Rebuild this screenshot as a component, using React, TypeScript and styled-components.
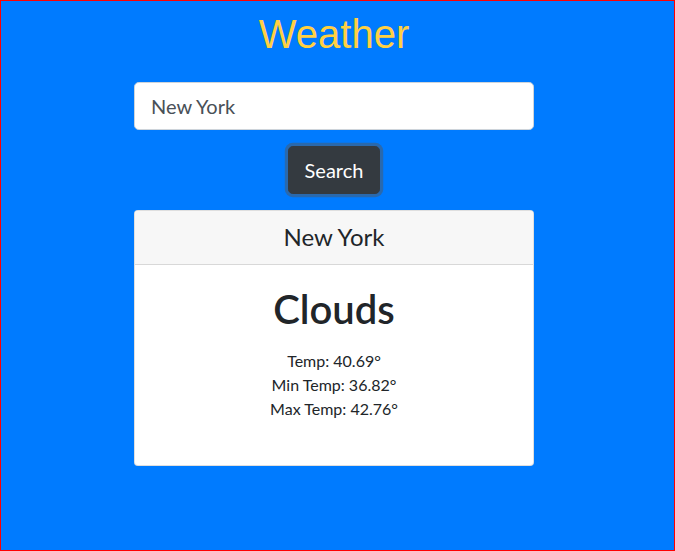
import React from "react";
import styled, { createGlobalStyle } from "styled-components";

const GlobalStyle = createGlobalStyle`
  *, *::before, *::after { box-sizing: border-box; }
  html, body { margin: 0; padding: 0; }
  body {
    font-family: Lato, "Open Sans", sans-serif;
    color: #212529;
    background: #007bff;
  }
`;

const Page = styled.div`
  width: 675px;
  height: 551px;
  border: 1px solid #ff0000;
  background: #007bff;
  display: flex;
  flex-direction: column;
  align-items: center;
  padding: 0 7px 0 0;
`;

const Title = styled.h1`
  margin: 9px 0 24px;
  font-family: "Liberation Sans", Arial, sans-serif;
  font-size: 40px;
  font-weight: 400;
  line-height: 48px;
  color: #ffd043;
  text-align: center;
`;

const Column = styled.div`
  width: 400px;
  display: flex;
  flex-direction: column;
  align-items: center;
`;

const SearchInput = styled.input`
  width: 100%;
  height: 48px;
  padding: 8px 16px;
  font-family: inherit;
  font-size: 20px;
  line-height: 1.5;
  color: #495057;
  background: #fff;
  border: 1px solid #ced4da;
  border-radius: 4.8px;
  outline: none;
`;

const SearchButton = styled.button`
  margin-top: 16px;
  padding: 8px 16px;
  font-family: inherit;
  font-size: 20px;
  line-height: 1.5;
  color: #fff;
  background: #343a40;
  border: 1px solid #343a40;
  border-radius: 4.8px;
  box-shadow: 0 0 0 3.2px rgba(82, 88, 93, 0.5);
  cursor: pointer;
`;

const Card = styled.div`
  margin-top: 16px;
  width: 100%;
  background: #fff;
  border: 1px solid rgba(0, 0, 0, 0.125);
  border-radius: 4px;
  overflow: hidden;
`;

const CardHeader = styled.div`
  padding: 12px 20px;
  background: #f7f7f7;
  border-bottom: 1px solid rgba(0, 0, 0, 0.125);
  font-size: 24px;
  line-height: 1.2;
  text-align: center;
  color: #212529;
`;

const CardBody = styled.div`
  padding: 20px 20px 44px;
  text-align: center;
`;

const Condition = styled.h2`
  margin: 0 0 16px;
  font-size: 40px;
  font-weight: 600;
  line-height: 1.2;
  color: #212529;
`;

const StatLine = styled.div`
  font-size: 16px;
  line-height: 24px;
  color: #212529;
`;

export default function App() {
  return (
    <>
      <GlobalStyle />
      <Page>
        <Title>Weather</Title>
        <Column>
          <SearchInput defaultValue="New York" />
          <SearchButton>Search</SearchButton>
          <Card>
            <CardHeader>New York</CardHeader>
            <CardBody>
              <Condition>Clouds</Condition>
              <StatLine>Temp: 40.69°</StatLine>
              <StatLine>Min Temp: 36.82°</StatLine>
              <StatLine>Max Temp: 42.76°</StatLine>
            </CardBody>
          </Card>
        </Column>
      </Page>
    </>
  );
}
